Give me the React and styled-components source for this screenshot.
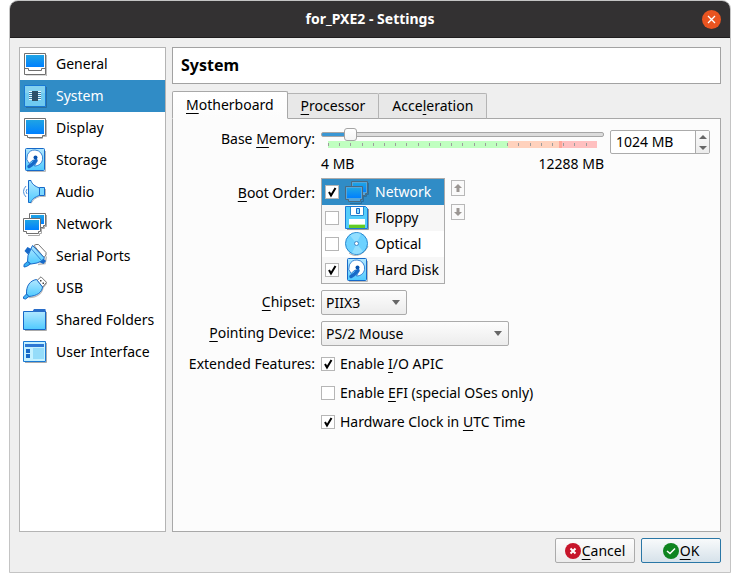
import React, { useState } from "react";
import styled, { createGlobalStyle, css } from "styled-components";

const GlobalStyle = createGlobalStyle`
  *, *::before, *::after { box-sizing: border-box; }
  body {
    margin: 0;
    background: #fff;
    color: #000;
    font: 14px/20px "Noto Sans", "Open Sans", sans-serif;
  }
  button, input, select { font: inherit; color: inherit; margin: 0; }
  u { text-decoration: underline; text-decoration-thickness: 1px; text-underline-offset: 3px; }
`;

const Window = styled.div`
  display: flex;
  flex-direction: column;
  min-height: calc(100vh - 9px);
  margin: 0 9px 9px;
  border: 1px solid #c4c4c4;
  border-radius: 9px 9px 0 0;
  overflow: hidden;
  background: #efefef;
`;

const TitleBar = styled.header`
  display: grid;
  grid-template-columns: 1fr auto 1fr;
  align-items: center;
  height: 37px;
  padding: 0 9px;
  background: #333132;
  border-bottom: 1px solid #1f1d1e;
  color: #fff;
`;

const Title = styled.h1`
  grid-column: 2;
  margin: 0;
  font-size: 14px;
  font-weight: 700;
`;

const CloseButton = styled.button`
  justify-self: end;
  display: grid;
  place-items: center;
  width: 19px;
  height: 19px;
  padding: 0;
  border: 0;
  border-radius: 50%;
  background: #e95420;
`;

const Body = styled.div`
  flex: 1;
  display: grid;
  grid-template-columns: 147px minmax(0, 1fr);
  gap: 6px;
  padding: 9px 9px 6px;
`;

const Sidebar = styled.nav`
  display: flex;
  flex-direction: column;
  border: 1px solid #b4b4b4;
  background: #fff;
`;

const NavItem = styled.a`
  display: flex;
  align-items: center;
  gap: 9px;
  height: 32px;
  padding: 0 3px;
  color: ${(p) => (p.$active ? "#fff" : "#000")};
  background: ${(p) => (p.$active ? "#308cc6" : "transparent")};
  text-decoration: none;
  white-space: nowrap;
`;

const Glyph = styled.svg`
  display: block;
  flex: none;
`;

const Main = styled.main`
  display: flex;
  flex-direction: column;
`;

const Heading = styled.h2`
  margin: 0 0 7px;
  padding: 0 8px;
  border: 1px solid #a2a2a2;
  background: #fff;
  font-size: 16px;
  line-height: 35px;
`;

const Tabs = styled.div`
  display: flex;
  align-items: flex-end;
  z-index: 1;
`;

const Tab = styled.button`
  height: 26px;
  padding: 0 13px;
  border: 1px solid #b4b4b4;
  border-left-width: 0;
  border-bottom: 1px solid #a8a8a8;
  border-radius: 0 2px 0 0;
  background: #e8e8e8;
  white-space: nowrap;
  ${(p) =>
    p.$active &&
    css`
      height: 28px;
      border-left-width: 1px;
      border-radius: 2px 2px 0 0;
      border-color: #a8a8a8;
      border-bottom-color: #fcfcfc;
      background: linear-gradient(#fff, #fcfcfc);
    `}
`;

const Panel = styled.section`
  flex: 1;
  margin-top: -1px;
  padding: 8px 10px 8px 0;
  border: 1px solid #a8a8a8;
  background: #fcfcfc;
`;

const Form = styled.div`
  display: grid;
  grid-template-columns: 142px minmax(0, 1fr);
  column-gap: 6px;
  row-gap: 6px;
`;

const FieldLabel = styled.label`
  padding-top: ${(p) => (p.$top ? p.$top : 2)}px;
  text-align: right;
  white-space: nowrap;
`;

const MemoryRow = styled.div`
  display: grid;
  grid-template-columns: minmax(0, 1fr) 100px;
  gap: 6px;
  align-items: start;
`;

const SliderBlock = styled.div`
  display: flex;
  flex-direction: column;
`;

const Range = styled.input`
  appearance: none;
  display: block;
  width: 100%;
  height: 14px;
  background: transparent;
  &::-webkit-slider-runnable-track {
    height: 5px;
    border: 1px solid #a6a6a6;
    border-radius: 2px;
    background: linear-gradient(90deg, #3a97d4 10%, #dcdcdc 10%);
  }
  &::-webkit-slider-thumb {
    appearance: none;
    width: 13px;
    height: 13px;
    margin-top: -5px;
    border: 1px solid #a4a4a4;
    border-radius: 3px;
    background: linear-gradient(#fff, #f4f4f4);
  }
`;

const Scale = styled.div`
  display: flex;
  align-items: center;
  height: 7px;
  margin: 0 7px;
  background: linear-gradient(
    90deg,
    #c0ffc0 67%,
    #ffd2bd 67%,
    #ffd2bd 86%,
    #ffa79a 86%,
    #ffa79a 87%,
    #ffc0c0 87%
  );
`;

const Tick = styled.span`
  flex: 1;
  height: 3px;
  border-left: 1px solid #9c9c9c;
`;

const Bounds = styled.div`
  display: flex;
  justify-content: space-between;
  padding-top: 8px;
  line-height: 16px;
`;

const Spin = styled.div`
  display: grid;
  grid-template-columns: minmax(0, 1fr) 14px;
  height: 24px;
  margin-top: 3px;
  border: 1px solid #ababab;
  border-radius: 2px;
  background: #fff;
  overflow: hidden;
`;

const SpinInput = styled.input`
  width: 100%;
  padding: 0 5px;
  border: 0;
  background: transparent;
  outline: 0;
`;

const SpinButtons = styled.div`
  display: grid;
  grid-template-rows: 1fr 1fr;
  border-left: 1px solid #ababab;
  background: linear-gradient(#fbfbfb, #ececec);
`;

const SpinButton = styled.button`
  display: grid;
  place-items: center;
  padding: 0;
  border: 0;
  background: transparent;
`;

const BootRow = styled.div`
  display: flex;
  align-items: flex-start;
  gap: 6px;
`;

const BootList = styled.ul`
  width: 124px;
  margin: 0;
  padding: 0;
  border: 1px solid #ababab;
  list-style: none;
`;

const BootItem = styled.li`
  color: ${(p) => (p.$selected ? "#fff" : "#000")};
  background: ${(p) => (p.$selected ? "#308cc6" : "#fff")};
  &:nth-child(even) { background: #f7f7f7; }
`;

const BootLabel = styled.label`
  display: flex;
  align-items: center;
  gap: 6px;
  height: 26px;
  padding-left: 3px;
  white-space: nowrap;
`;

const MoveButtons = styled.div`
  display: flex;
  flex-direction: column;
  gap: 8px;
  padding-top: 2px;
`;

const MoveButton = styled.button`
  display: grid;
  place-items: center;
  width: 14px;
  height: 16px;
  padding: 0;
  border: 1px solid #b8b8b8;
  background: #fafafa;
`;

const CheckFrame = styled.span`
  display: grid;
  flex: none;
  width: 14px;
  height: 14px;
  > * { grid-area: 1 / 1; }
  > svg { pointer-events: none; }
`;

const CheckInput = styled.input`
  appearance: none;
  width: 14px;
  height: 14px;
  border: 1px solid #b6b6b6;
  background: #fff;
  &:not(:checked) + svg { visibility: hidden; }
`;

const SelectFrame = styled.div`
  display: grid;
  width: ${(p) => p.$width}px;
  align-items: center;
  > * { grid-area: 1 / 1; }
  > svg { justify-self: end; margin-right: 7px; pointer-events: none; }
`;

const Select = styled.select`
  appearance: none;
  height: 25px;
  width: 100%;
  padding: 0 20px 0 4px;
  border: 1px solid #ababab;
  border-radius: 2px;
  background: linear-gradient(#fdfdfd, #ececec);
`;

const Checks = styled.div`
  display: flex;
  flex-direction: column;
  gap: 9px;
  padding-top: 2px;
`;

const CheckLabel = styled.label`
  display: flex;
  align-items: center;
  gap: 5px;
`;

const Footer = styled.footer`
  display: flex;
  justify-content: flex-end;
  gap: 6px;
  padding: 0 9px 9px;
`;

const ActionButton = styled.button`
  display: flex;
  align-items: center;
  justify-content: center;
  gap: 1px;
  width: 80px;
  height: 25px;
  padding: 0;
  border: 1px solid ${(p) => (p.$primary ? "#2a77a6" : "#ababab")};
  border-radius: 2px;
  background: ${(p) =>
    p.$primary ? "linear-gradient(#f8fafb, #d6e2ea)" : "linear-gradient(#fdfdfd, #ececec)"};
`;

const BLUE = "#1769c8";

const Shape = ({ size = 24, children }) => (
  <Glyph width={size} height={size} viewBox="0 0 24 24" fill="none" aria-hidden="true">
    <defs>
      <linearGradient id="sky" x1="0" y1="0" x2="0" y2="1">
        <stop offset="0" stopColor="#b4e8ff" />
        <stop offset="1" stopColor="#4fcaff" />
      </linearGradient>
      <linearGradient id="screen" x1="0" y1="0" x2="0" y2="1">
        <stop offset="0" stopColor="#1fa4e4" />
        <stop offset="1" stopColor="#0080ff" />
      </linearGradient>
    </defs>
    {children}
  </Glyph>
);

const GeneralIcon = () => (
  <Shape>
    <path d="M23.500 3v21H3" stroke="#bbb" />
    <path d="M1.500 1.500h21v21h-21z" fill="#fff" stroke="#707070" />
    <path d="M3 3h18v12H3z" fill="url(#screen)" />
    <path d="M1.500 16.500h4v2h13v-2h4" stroke="#707070" />
  </Shape>
);

const SystemIcon = () => (
  <Shape>
    <path d="M23.500 3v20.500H3" stroke="#286f9f" />
    <path d="M1.500 1.500h21v21h-21z" fill="#6fcaf0" stroke="#1979d4" />
    <path d="M2 2h20v7H2z" fill="#8dd5f0" opacity=".7" />
    <path d="M6 7.500h12M6 9.500h12M6 11.500h12M6 13.500h12M6 15.500h12" stroke="#e8f7ff" />
    <path d="M6 8.500h12M6 10.500h12M6 12.500h12M6 14.500h12" stroke="#377fa8" />
    <path d="M9 7h6v10H9z" fill="#2f5068" />
  </Shape>
);

const DisplayIcon = () => (
  <Shape>
    <path d="M23.500 4v16.500h-4v2H6" stroke="#bbb" />
    <path d="M1.500 2.500h21v17h-3v2h-15v-2h-3z" fill="#fff" stroke="#707070" />
    <path d="M3 4h18v14H3z" fill="url(#screen)" />
  </Shape>
);

const DiskIcon = () => (
  <Shape>
    <path d="M22.500 3v20.500H4" stroke="#bbb" />
    <rect x="2.500" y=".5" width="19" height="22" rx="1" fill="url(#sky)" stroke={BLUE} />
    <path d="M12 2a8 8 0 0 1 7.500 9.500c-.6 4-4 6.500-8 6.500l2.500-5-4-1-4 3.500A8 8 0 0 1 12 2z" fill="#fff" stroke={BLUE} strokeWidth=".8" />
    <circle cx="12.500" cy="9.500" r="2" fill="#0751ae" />
    <path d="M13 12.500c-2 1-2 3-4 4L6 18.500" stroke={BLUE} strokeWidth="3.500" strokeLinecap="round" />
  </Shape>
);

const AudioIcon = () => (
  <Shape>
    <path d="M8 23.500c2-4 5-6 9-7h5.500V9" stroke="#bbb" />
    <path d="M5.500.5H8c.5 3 4 6 8.500 7.500v7.500C12 17 8.500 19.500 8 22.500H5.500z" fill="url(#sky)" stroke={BLUE} />
    <path d="M16.500 7.500h5v8h-5z" fill="#7cd7ff" stroke={BLUE} />
    <path d="M3 6Q-2 11.500 3 17M4 9q-2 2.500 0 5" stroke="#4b8ed8" />
  </Shape>
);

const NetworkIcon = ({ selected }) => (
  <Shape>
    <path d="M23.500 3v11.500h-2v2h-3M18.500 9v12.500h-2v2H5" stroke={selected ? "#286f9f" : "#aaa"} />
    <path d="M6.500 1.500h16v12h-2v2h-12v-2h-2z" fill={selected ? "#55a6dc" : "#fff"} stroke={selected ? "#4b697f" : "#707070"} />
    <path d="M8 3h13v9H8z" fill="url(#screen)" />
    <path d="M.5 6.500h17v13h-2v2h-12v-2h-3z" fill={selected ? "#55a6dc" : "#fff"} stroke={selected ? "#4b697f" : "#707070"} />
    <path d="M2 8h14v10H2z" fill="url(#screen)" />
  </Shape>
);

const SerialIcon = () => (
  <Shape>
    <path d="M15 20.500l7-1 1.500-7" stroke="#bbb" strokeWidth="1.500" />
    <path d="M11 1.500L13 .5h2.500l7.500 8v2.500l-2 2.500z" fill="#fff" stroke="#777" />
    <path d="M1.500 7l3-4 4.500 2.500-4 5z" fill={BLUE} />
    <path d="M16 18l4.500 2 2.500-3-3-3z" fill={BLUE} />
    <path d="M9.500 1.500l12 12.500-3 3-4.500 2-6 1-3.500-2.500.5-6L7 7z" fill="url(#sky)" stroke={BLUE} />
    <path d="M8 4.500l10.500 12" stroke={BLUE} strokeWidth=".7" />
    <path d="M4.500 17.500l3 2.500-4 2.500-2.500.5v-2.500z" fill="#35aef1" stroke={BLUE} />
  </Shape>
);

const UsbIcon = () => (
  <Shape>
    <path d="M6 21.500c8 0 13-4 14-10l4-5" stroke="#bbb" strokeWidth="1.500" />
    <path d="M14 4.500L18 .8l5.500 5.500-3.700 4.700z" fill="#fff" stroke="#777" />
    <path d="M17 4h1.500v1.500H17zM19.500 6.500H21V8h-1.500z" fill="#444" />
    <path d="M13.500 3.500l6 7.500c-.5 5-5 9-14 9.500L3.500 18C3 10 7 4.500 13.500 3.500z" fill="url(#sky)" stroke={BLUE} />
    <path d="M3.500 18l2.500 2.500L2.500 23l-2-.5v-1.500z" fill="#42b4f4" stroke={BLUE} />
  </Shape>
);

const FolderIcon = () => (
  <Shape>
    <path d="M23.500 4v18.500H2" stroke="#aaa" />
    <path d="M.5 3.500H10l2-.5h10.500v18.500H.5z" fill="url(#sky)" stroke={BLUE} />
    <path d="M9.500 3.500l1.500-2.500h11.500v3H12z" fill="#286dc9" />
  </Shape>
);

const InterfaceIcon = () => (
  <Shape>
    <path d="M23.500 3v19.500H2" stroke="#aaa" />
    <path d="M.5 1.500h22v20H.5z" fill="#c4f1ff" stroke="#1979d4" />
    <path d="M2 4h19v3H2z" fill="#2d78d3" />
    <path d="M3 9h4v4H3zM3 14h4v4H3z" fill={BLUE} />
    <path d="M10 8h11v11H10z" fill="#95dcf9" />
  </Shape>
);

const FloppyIcon = () => (
  <Shape>
    <path d="M23.500 3v20.500H2" stroke="#999" />
    <path d="M.5.5h20l2 2v20H.5z" fill="#54cdfb" stroke="#1979d4" />
    <path d="M5 1h14v9H5z" fill="#fff" />
    <path d="M5.500 1v8.500h13V1" stroke="#2489cf" />
    <path d="M11.500 2.500h3v5h-3z" fill="#8ae0ff" stroke={BLUE} />
    <path d="M4 13h16v9H4z" fill="#fff" />
    <path d="M4 19h16v3H4z" fill="#62cb24" />
    <path d="M4 18h16v1H4z" fill="#c5f5ad" />
  </Shape>
);

const OpticalIcon = () => (
  <Shape>
    <path d="M4 21c6 5 15 2 19-7" stroke="#aaa" />
    <circle cx="11.500" cy="11.500" r="11" fill="#6dd2ff" stroke="#2787cf" />
    <path d="M11.500 11.500L5 3.500a10.500 10.500 0 0 1 11-1.500zM11.500 11.500l6.500 8a10.500 10.500 0 0 1-11 1.500z" fill="#92dfff" />
    <circle cx="11.500" cy="11.500" r="2" fill="#fff" stroke="#3d87c8" />
  </Shape>
);

const Check = (props) => (
  <CheckFrame>
    <CheckInput type="checkbox" {...props} />
    <Glyph width="14" height="14" viewBox="0 0 14 14" fill="none" aria-hidden="true">
      <path d="M4 7l2 3.500L10.500 3" stroke="#000" strokeWidth="2" />
    </Glyph>
  </CheckFrame>
);

const Triangle = ({ up, height = 5 }) => (
  <Glyph width="8" height={height} viewBox="0 0 8 5" preserveAspectRatio="none" aria-hidden="true">
    <path d={up ? "M0 5h8L4 0z" : "M0 0h8L4 5z"} fill="#666" />
  </Glyph>
);

const Arrow = ({ down }) => (
  <Glyph width="10" height="10" viewBox="0 0 10 10" aria-hidden="true">
    <path d={down ? "M3.500 1h3v4H9L5 9 1 5h2.500z" : "M5 1l4 4H6.500v4h-3V5H1z"} fill="#9b9693" />
  </Glyph>
);

const Combo = ({ id, width, value }) => (
  <SelectFrame $width={width}>
    <Select id={id} defaultValue={value}>
      <option>{value}</option>
    </Select>
    <Triangle />
  </SelectFrame>
);

const sections = [
  ["General", GeneralIcon],
  ["System", SystemIcon],
  ["Display", DisplayIcon],
  ["Storage", DiskIcon],
  ["Audio", AudioIcon],
  ["Network", NetworkIcon],
  ["Serial Ports", SerialIcon],
  ["USB", UsbIcon],
  ["Shared Folders", FolderIcon],
  ["User Interface", InterfaceIcon],
];

const bootDevices = [
  ["Network", NetworkIcon, true],
  ["Floppy", FloppyIcon, false],
  ["Optical", OpticalIcon, false],
  ["Hard Disk", DiskIcon, true],
];

export default function App() {
  const [memory, setMemory] = useState(1024);
  const step = (delta) => setMemory((m) => Math.min(12288, Math.max(4, m + delta)));

  return (
    <>
      <GlobalStyle />
      <Window>
        <TitleBar>
          <Title>for_PXE2 - Settings</Title>
          <CloseButton aria-label="Close">
            <Glyph width="9" height="9" viewBox="0 0 9 9" aria-hidden="true">
              <path d="M1 1l7 7M8 1L1 8" stroke="#fff" strokeWidth="1.300" />
            </Glyph>
          </CloseButton>
        </TitleBar>
        <Body>
          <Sidebar>
            {sections.map(([name, Icon]) => (
              <NavItem key={name} href="#" $active={name === "System"}>
                <Icon />
                {name}
              </NavItem>
            ))}
          </Sidebar>
          <Main>
            <Heading>System</Heading>
            <Tabs role="tablist">
              <Tab role="tab" aria-selected="true" $active><u>M</u>otherboard</Tab>
              <Tab role="tab" aria-selected="false"><u>P</u>rocessor</Tab>
              <Tab role="tab" aria-selected="false">Acce<u>l</u>eration</Tab>
            </Tabs>
            <Panel>
              <Form>
                <FieldLabel htmlFor="memory">Base <u>M</u>emory:</FieldLabel>
                <MemoryRow>
                  <SliderBlock>
                    <Range
                      id="memory"
                      type="range"
                      min="4"
                      max="12288"
                      value={memory}
                      onChange={(e) => setMemory(Number(e.target.value))}
                    />
                    <Scale>
                      {Array.from({ length: 24 }, (_, i) => <Tick key={i} />)}
                    </Scale>
                    <Bounds><span>4 MB</span><span>12288 MB</span></Bounds>
                  </SliderBlock>
                  <Spin>
                    <SpinInput aria-label="Base memory size" value={`${memory} MB`} readOnly />
                    <SpinButtons>
                      <SpinButton aria-label="Increase" onClick={() => step(4)}><Triangle up height={4} /></SpinButton>
                      <SpinButton aria-label="Decrease" onClick={() => step(-4)}><Triangle height={4} /></SpinButton>
                    </SpinButtons>
                  </Spin>
                </MemoryRow>

                <FieldLabel as="span" $top={5}><u>B</u>oot Order:</FieldLabel>
                <BootRow>
                  <BootList>
                    {bootDevices.map(([name, Icon, on], i) => (
                      <BootItem key={name} $selected={i === 0}>
                        <BootLabel>
                          <Check defaultChecked={on} />
                          <Icon selected={i === 0} />
                          {name}
                        </BootLabel>
                      </BootItem>
                    ))}
                  </BootList>
                  <MoveButtons>
                    <MoveButton aria-label="Move up"><Arrow /></MoveButton>
                    <MoveButton aria-label="Move down"><Arrow down /></MoveButton>
                  </MoveButtons>
                </BootRow>

                <FieldLabel htmlFor="chipset"><u>C</u>hipset:</FieldLabel>
                <Combo id="chipset" width={86} value="PIIX3" />

                <FieldLabel htmlFor="pointing"><u>P</u>ointing Device:</FieldLabel>
                <Combo id="pointing" width={188} value="PS/2 Mouse" />

                <FieldLabel as="span">Extended Features:</FieldLabel>
                <Checks>
                  <CheckLabel><Check defaultChecked /><span>Enable <u>I</u>/O APIC</span></CheckLabel>
                  <CheckLabel><Check /><span>Enable <u>E</u>FI (special OSes only)</span></CheckLabel>
                  <CheckLabel><Check defaultChecked /><span>Hardware Clock in <u>U</u>TC Time</span></CheckLabel>
                </Checks>
              </Form>
            </Panel>
          </Main>
        </Body>
        <Footer>
          <ActionButton>
            <Glyph width="16" height="16" viewBox="0 0 16 16" aria-hidden="true">
              <circle cx="8" cy="8" r="8" fill="#c7162b" />
              <path d="M5.500 5.500l5 5M10.500 5.500l-5 5" stroke="#fff" strokeWidth="2" />
            </Glyph>
            <span><u>C</u>ancel</span>
          </ActionButton>
          <ActionButton $primary>
            <Glyph width="16" height="16" viewBox="0 0 16 16" fill="none" aria-hidden="true">
              <circle cx="8" cy="8" r="8" fill="#0e8420" />
              <path d="M4 8l3 2.500L12 5.500" stroke="#fff" strokeWidth="1.500" />
            </Glyph>
            <span><u>O</u>K</span>
          </ActionButton>
        </Footer>
      </Window>
    </>
  );
}
